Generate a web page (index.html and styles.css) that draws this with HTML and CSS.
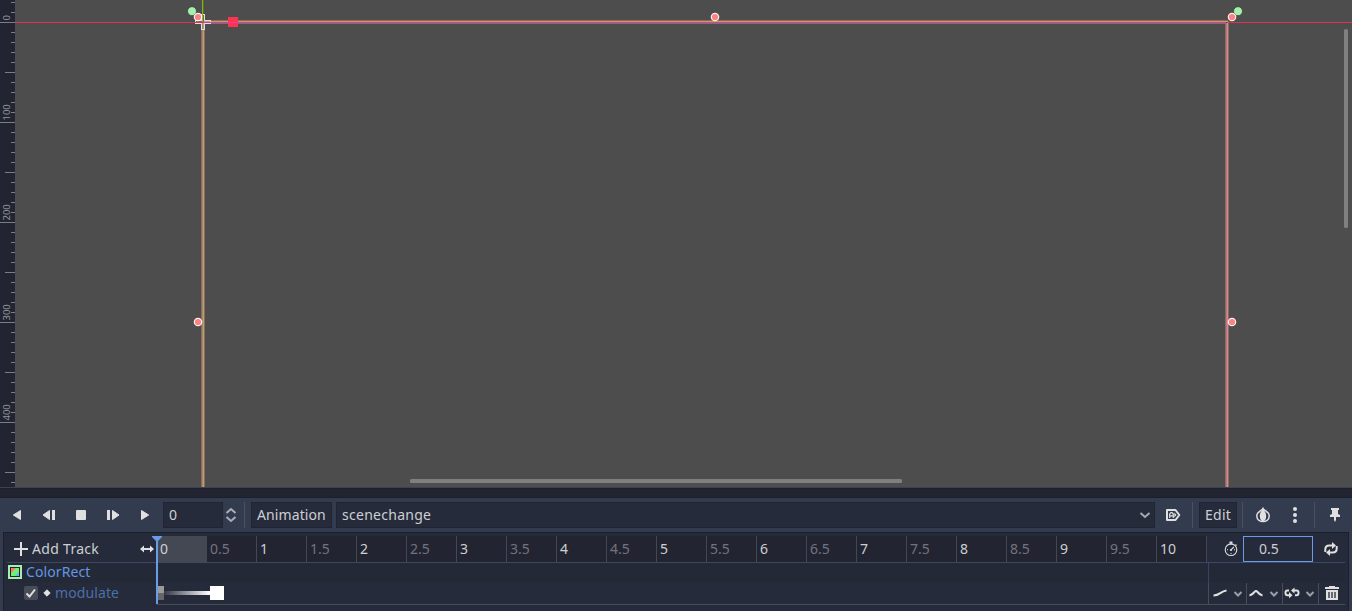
FILE: index.html
```html
<!DOCTYPE html>
<html lang="en">
<head>
<meta charset="utf-8">
<title>Animation editor</title>
<link rel="stylesheet" href="styles.css">
</head>
<body>
<main class="editor">
  <section class="viewport">
    <svg class="ruler" width="15" height="487" shape-rendering="crispEdges">
      <defs>
        <pattern id="ticks" y="22" width="15" height="100" patternUnits="userSpaceOnUse">
          <path d="M0 .5H15M11 10.5H15M11 20.5H15M11 30.5H15M11 40.5H15M5 50.5H15M11 60.5H15M11 70.5H15M11 80.5H15M11 90.5H15" stroke="#7b7e88"/>
        </pattern>
      </defs>
      <rect width="15" height="487" fill="url(#ticks)"/>
      <g class="ruler-label">
        <text transform="translate(10 20.500) rotate(-90)">0</text>
        <text transform="translate(10 120.500) rotate(-90)">100</text>
        <text transform="translate(10 220.500) rotate(-90)">200</text>
        <text transform="translate(10 320.500) rotate(-90)">300</text>
        <text transform="translate(10 420.500) rotate(-90)">400</text>
      </g>
    </svg>
    <svg class="canvas" width="1337" height="487" viewBox="15 0 1337 487">
      <g shape-rendering="crispEdges">
        <path d="M204 20.500H1228M204 23.500H1226M201.500 24V487M204.500 24V487M1225.500 24V487M1228.500 21V487" stroke="#8c6a5c"/>
        <path d="M204 21.500H1227M203.500 23V487M1227.500 21V487" stroke="#dc8e6a"/>
        <path d="M202.500 23V487" stroke="#7d9c70"/>
        <path d="M1226.500 23V487" stroke="#b272b0"/>
        <path d="M203 22.500H1226" stroke="#b84da5"/>
        <path d="M195 20h6v-6h4v6h6v4h-6v6h-4v-6h-6z" fill="#dedede"/>
        <path d="M196 21h6v-6h2v6h6v2h-6v6h-2v-6h-6z" fill="#73645f"/>
        <path d="M202.500 23V29" stroke="#7d9c70"/>
        <path d="M203.500 23V29M204 21.500H210" stroke="#d98b77"/>
        <path d="M202.500 0V22" stroke="#79bd00"/>
        <path d="M203.500 0V14" stroke="#5d6644"/>
        <path d="M15 22.500H203M1227 22.500H1352" stroke="#dc344f"/>
        <path d="M203 22.500H211" stroke="#b84da5"/>
        <rect x="228" y="17" width="10" height="10" fill="#fc3451"/>
        <path d="M228 22.500H238" stroke="#e8438a"/>
      </g>
      <g fill="#a5efac" stroke="#343c35" stroke-opacity=".75">
        <circle cx="192" cy="11.200" r="4.500"/>
        <circle cx="1238" cy="11.200" r="4.500"/>
      </g>
      <g fill="#ff8080" stroke="#fff" stroke-opacity=".9" stroke-width="1.200">
        <circle cx="198" cy="17" r="3.700"/>
        <circle cx="715" cy="17" r="3.700"/>
        <circle cx="1232" cy="17" r="3.700"/>
        <circle cx="198" cy="322" r="3.700"/>
        <circle cx="1232" cy="322" r="3.700"/>
      </g>
      <rect x="1344" y="29" width="4" height="199" rx="1.500" fill="#808080"/>
      <rect x="410" y="479" width="492" height="4" rx="1.500" fill="#808080"/>
    </svg>
  </section>

  <div class="splitter"></div>

  <section class="dock">
    <header class="toolbar">
      <div class="transport">
        <svg width="16" height="16"><path d="M11.500 3.500v9L4.300 8z" fill="#e0e0e0" stroke="#e0e0e0" stroke-linejoin="round"/></svg>
        <svg width="16" height="16"><path d="M8.500 3.500v9L2 8z" fill="#e0e0e0" stroke="#e0e0e0" stroke-linejoin="round"/><path d="M11 3h3v10h-3z" fill="#e0e0e0"/></svg>
        <svg width="16" height="16"><rect x="3" y="3" width="10" height="10" rx="1" fill="#e0e0e0"/></svg>
        <svg width="16" height="16"><path d="M7.500 3.500v9L14 8z" fill="#e0e0e0" stroke="#e0e0e0" stroke-linejoin="round"/><path d="M2 3h3v10H2z" fill="#e0e0e0"/></svg>
        <svg width="16" height="16"><path d="M4.500 3.500v9L11.700 8z" fill="#e0e0e0" stroke="#e0e0e0" stroke-linejoin="round"/></svg>
      </div>
      <div class="box position">0</div>
      <svg class="spin" width="16" height="16"><path d="M3.500 6L8 2l4.500 4M3.500 10l4.500 4 4.500-4" fill="none" stroke="#a9adb5" stroke-width="2"/></svg>
      <i class="sep sep-a"></i>
      <div class="box menu">Animation</div>
      <div class="box select"><span class="clip-name">scenechange</span>
        <svg width="16" height="16"><path d="M3.500 6L8 10l4.500-4" fill="none" stroke="#a4a8b0" stroke-width="2"/></svg>
      </div>
      <svg class="autoplay" width="16" height="16"><path d="M2 3h8.500l3.800 5-3.800 5H2z" fill="none" stroke="#e0e0e0" stroke-width="2" stroke-linejoin="round"/><path d="M4.700 11V7L6 5.600h1L8.300 7v4M4.700 8.800h3.600" fill="none" stroke="#e0e0e0" stroke-width="1.200"/><path d="M9.300 5.500L11.500 8l-2.200 2.500z" fill="#e0e0e0"/></svg>
      <i class="sep sep-b"></i>
      <div class="box edit">Edit</div>
      <i class="sep sep-c"></i>
      <svg class="onion" width="16" height="16"><path d="M8 1.500C7 3.800 1.800 4.500 1.800 9c0 3.500 3 5.500 6.200 5.500s6.200-2 6.200-5.500C14.200 4.500 9 3.800 8 1.500z" fill="none" stroke="#e0e0e0" stroke-width="1.500"/><path d="M8 1C7 4 4.800 5 4.800 9c0 3 1.200 5 3.200 5.500 2-.5 3.200-2.500 3.200-5.500C11.200 5 9 4 8 1z" fill="#e0e0e0"/></svg>
      <svg class="dots" width="16" height="18"><g fill="#e0e0e0"><circle cx="8" cy="3" r="2"/><circle cx="8" cy="9" r="2"/><circle cx="8" cy="15" r="2"/></g></svg>
      <i class="sep sep-d"></i>
      <svg class="pin" width="16" height="16"><path d="M4 1h8v2h-1v4l2 1v2H9v3l-1 2-1-2v-3H3V8l2-1V3H4z" fill="#e0e0e0"/></svg>
    </header>

    <div class="tracks">
      <div class="time-row">
        <div class="add">
          <svg width="14" height="14"><path d="M7 0v14M0 7h14" stroke="#e0e0e0" stroke-width="2"/></svg>
          <span>Add Track</span>
          <svg class="extent" width="14" height="8"><path d="M2 4h10" stroke="#e0e0e0" stroke-width="2"/><path d="M4 .5L0 4l4 3.500zM10 .5L14 4l-4 3.500z" fill="#e0e0e0"/></svg>
        </div>
        <div class="timeline">
          <span class="active strong">0</span><span>0.5</span><span class="strong">1</span><span>1.5</span><span class="strong">2</span><span>2.5</span><span class="strong">3</span><span>3.5</span><span class="strong">4</span><span>4.5</span><span class="strong">5</span><span>5.5</span><span class="strong">6</span><span>6.5</span><span class="strong">7</span><span>7.5</span><span class="strong">8</span><span>8.5</span><span class="strong">9</span><span>9.5</span><span class="strong">10</span>
        </div>
        <div class="length">
          <svg width="16" height="16"><circle cx="8" cy="8.700" r="5.800" fill="none" stroke="#e0e0e0" stroke-width="1.100"/><path d="M6.500 .5h3v2h-3z" fill="#e0e0e0"/><path d="M8 2v2M8 8.800L10.800 6M12.500 3.500l1 1M4 8.700h1M11 8.700h1M8 12v1" stroke="#e0e0e0" stroke-width="1.100"/><circle cx="8" cy="9" r="1.100" fill="#e0e0e0"/></svg>
          <div class="length-value">0.5</div>
          <svg width="16" height="16"><path d="M2.300 11V8.500q0-4 4-4H10M13.700 5v2.500q0 4-4 4H6" fill="none" stroke="#e0e0e0" stroke-width="2"/><path d="M9 1l4 3.500L9 8zM7 8l-4 3.500L7 15z" fill="#e0e0e0"/></svg>
        </div>
      </div>

      <div class="node-row">
        <div class="node">
          <svg width="14" height="14"><path fill="#a5efac" d="M0 0h14v14H0z"/><path fill="#202531" d="M2 2h10v10H2z"/><path fill="#70f070" d="M3 3h8v8H3z"/><path fill="#ff7070" d="M3 3h5L3 8z"/><path fill="#70b0f8" d="M11 7v4H7z"/></svg>
          <span>ColorRect</span>
        </div>
        <div class="node-end"></div>
      </div>

      <div class="property-row">
        <div class="property">
          <svg width="14" height="14"><rect width="14" height="14" rx="2" fill="#484c57"/><path d="M2.500 7.500l3 3L11 3.500" fill="none" stroke="#e0e0e0" stroke-width="2"/></svg>
          <svg width="8" height="8"><path d="M4 .8L7.200 4 4 7.200.8 4z" fill="#e0e0e0" stroke="#e0e0e0" stroke-linejoin="round"/></svg>
          <span>modulate</span>
        </div>
        <div class="keys"><i class="key-start"></i><i class="fade"></i><i class="key-end"></i></div>
        <div class="modes">
          <div class="mode"><svg width="16" height="16"><path d="M1.500 10.500C8 10.500 8 6.500 14.500 5.500" fill="none" stroke="#e0e0e0" stroke-width="2"/></svg><svg width="10" height="16"><path d="M1.500 7L5 10.500 8.500 7" fill="none" stroke="#9a9ea8" stroke-width="2"/></svg></div>
          <div class="mode"><svg width="16" height="16"><path d="M1.500 10.500Q4 10 6.500 7 8 5 9.500 7 12 10 14.500 10.500" fill="none" stroke="#e0e0e0" stroke-width="2"/></svg><svg width="10" height="16"><path d="M1.500 7L5 10.500 8.500 7" fill="none" stroke="#9a9ea8" stroke-width="2"/></svg></div>
          <div class="mode"><svg width="16" height="16"><path d="M5 5.500H3.500a2 2 0 0 0-2 2v.7a2 2 0 0 0 2 2H6M9 5.500h3.500a2 2 0 0 1 2 2v.7a2 2 0 0 1-2 2H11" fill="none" stroke="#e0e0e0" stroke-width="2"/><path d="M5 7l3.500 3.200L5 13.200zM10.500 2.500L7 5.500l3.500 3z" fill="#e0e0e0"/></svg><svg width="10" height="16"><path d="M1.500 7L5 10.500 8.500 7" fill="none" stroke="#9a9ea8" stroke-width="2"/></svg></div>
          <div class="mode trash"><svg width="14" height="14"><path d="M4 0h6v1h4v2H0V1h4zM1 4h12v10H1z" fill="#e0e0e0"/><path d="M4 6v6M7 6v6M10 6v6" stroke="#262b3b" stroke-width="1.300"/></svg></div>
        </div>
      </div>
      <svg class="playhead" width="10" height="68"><path d="M0 0h10v1L6 5v63H4V5L0 1z" fill="#699ce8"/></svg>
    </div>
  </section>
</main>
</body>
</html>
```
FILE: styles.css
```css
* { box-sizing: border-box; }
body { margin: 0; overflow: hidden; background: #333b4f; color: #cdcfd3; font: 14px/20px "Noto Sans", sans-serif; }
svg { display: block; flex: none; }
.editor { width: 1352px; height: 611px; display: flex; flex-direction: column; overflow: hidden; }
.viewport { display: flex; height: 487px; flex: none; background: #4d4d4d; }
.ruler { background: #222531; }
.ruler-label { font-size: 9.5px; fill: #92959e; }
.splitter { height: 11px; flex: none; background: #222531; border-top: 1px solid #3b4250; border-bottom: 1px solid #1b1f2a; box-shadow: inset 0 1px #1b202b; }
.dock { flex: 1; display: flex; flex-direction: column; background: #333b4f; }

.toolbar { height: 34px; flex: none; display: flex; align-items: center; padding-left: 9px; }
.transport { display: flex; gap: 16px; }
.box { height: 26px; background: #262b3b; border: 1px solid #202531; line-height: 24px; padding-left: 5px; white-space: nowrap; }
.position { width: 60px; margin-left: 10px; }
.sep { width: 1px; height: 26px; background: #4b5160; flex: none; }
.sep-a { margin-left: 5px; }
.menu { width: 81px; margin-left: 6px; letter-spacing: .1px; }
.select { width: 819px; margin-left: 4px; display: flex; align-items: center; justify-content: space-between; padding-right: 1px; }
.clip-name { letter-spacing: .27px; }
.autoplay { margin-left: 10px; }
.sep-b { margin-left: 11px; }
.edit { width: 38px; margin-left: 6px; letter-spacing: .25px; }
.sep-c { margin-left: 5px; }
.onion { margin-left: 12px; }
.dots { margin-left: 16px; }
.sep-d { margin-left: 11px; }
.pin { margin-left: 12px; }

.tracks { position: relative; height: 79px; margin: 0 3px; padding: 3px 3px 0; background: #262b3b; border: 1px solid #1c202b; border-bottom: 0; }
.time-row { display: flex; height: 27px; border-bottom: 1px solid #3c4864; }
.add { width: 149px; display: flex; align-items: center; padding-left: 7px; }
.add span { margin-left: 4px; letter-spacing: .3px; }
.extent { margin-left: auto; margin-right: 2px; }
.timeline { display: flex; width: 1051px; background: #222531; border-right: 1px solid #444853; }
.timeline span { width: 50px; border-left: 1px solid #444853; padding-left: 3px; line-height: 26px; color: #70747f; white-space: nowrap; }
.timeline .strong { color: #cdcfd3; }
.timeline .active { background: #444853; }
.length { display: flex; align-items: center; flex: 1; padding-left: 16px; }
.length-value { width: 70px; height: 26px; margin: 0 10px 0 4px; border: 1px solid #699ce8; line-height: 24px; padding-left: 15px; }
.node-row { display: flex; height: 20px; background: #232936; color: #6496e3; }
.node { width: 1201px; display: flex; align-items: center; padding-left: 1px; gap: 4px; line-height: 18px; }
.node svg { margin-top: -2px; }
.node span { margin-top: -2px; letter-spacing: .1px; }
.node-end { flex: 1; border-left: 1px solid #344664; }
.property-row { display: flex; height: 22px; color: #4d6fa8; }
.property { width: 150px; display: flex; align-items: center; padding: 0 0 2px 17px; }
.property svg + svg { margin-left: 5px; }
.property span { margin-left: 4px; letter-spacing: .1px; }
.keys { display: flex; align-items: center; width: 1051px; padding-bottom: 1px; border-bottom: 1px solid #494d59; }
.key-start { width: 7px; height: 14px; background: linear-gradient(#9a9a9a 50%, #666 50%); }
.fade { width: 46px; height: 4px; background: linear-gradient(90deg, #343846, #fff); }
.key-end { width: 14px; height: 14px; background: #fff; }
.modes { display: flex; flex: 1; border-bottom: 1px solid #494d59; }
.mode { width: 36px; display: flex; align-items: center; border-left: 1px solid #494d59; gap: 5px; padding: 0 0 1px 1px; }
.mode:first-child { width: 38px; padding-left: 3px; }
.mode.trash { width: 27px; padding-left: 6px; }
.playhead { position: absolute; left: 148px; top: 3px; }
```
